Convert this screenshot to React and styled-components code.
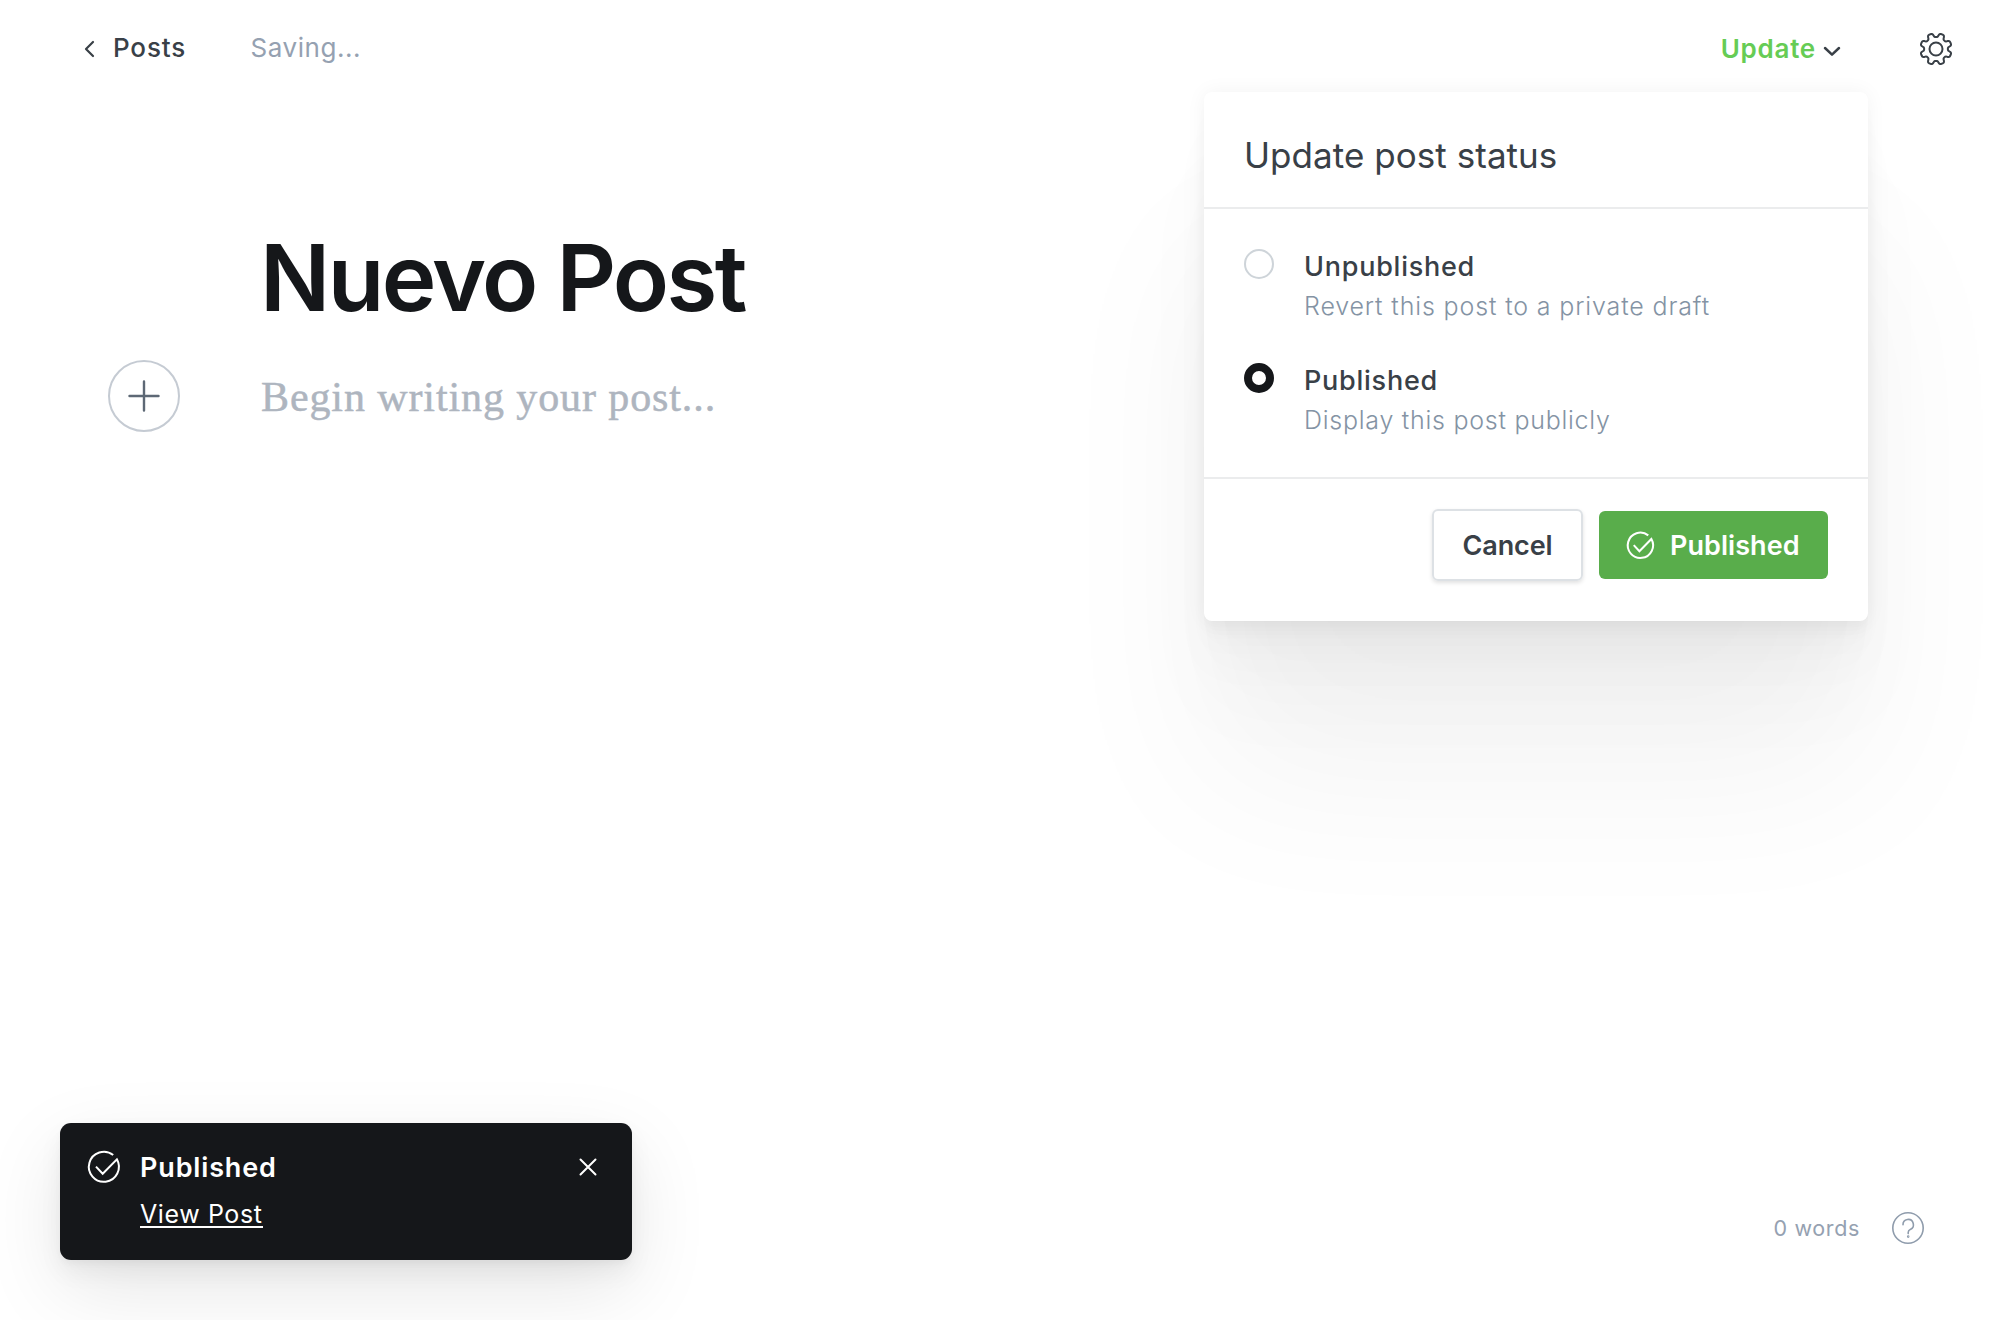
import React from "react";
import styled, { createGlobalStyle } from "styled-components";

const sans = '"Inter", "Liberation Sans", sans-serif';

const Global = createGlobalStyle`
  *, *::before, *::after { box-sizing: border-box; }
  body { margin: 0; background: #fff; font-family: ${sans}; color: #394047; }
  button { font: inherit; color: inherit; background: none; border: 0; padding: 0; margin: 0; cursor: pointer; }
  h1, h2, p { margin: 0; font-weight: inherit; font-size: inherit; }
  svg { display: block; flex: none; overflow: visible; }
`;

const Screen = styled.div`
  position: relative;
  display: flex;
  flex-direction: column;
  width: 2000px;
  height: 1320px;
  overflow: hidden;
`;

const Label = styled.span`
  display: block;
  white-space: nowrap;
  font-size: ${(p) => p.$size}px;
  font-weight: ${(p) => p.$weight || 400};
  letter-spacing: ${(p) => p.$track || 0}px;
  line-height: ${(p) => p.$line || 32}px;
  color: ${(p) => p.$color || "inherit"};
`;

const Header = styled.header`
  display: flex;
  align-items: center;
  height: 97px;
  padding: 0 48px 0 84px;
`;

const HeaderLeft = styled.div`
  display: flex;
  align-items: center;
  gap: 64.5px;
  padding-bottom: 2px;
`;

const BackLink = styled.button`
  display: flex;
  align-items: center;
  gap: 17px;
`;

const UpdateButton = styled.button`
  display: flex;
  align-items: center;
  gap: 7px;
  margin: 1px 79px 0 auto;

  svg { margin-top: 3px; }
`;

const Editor = styled.main`
  display: flex;
  flex-direction: column;
  padding: 125px 0 0 108px;
`;

const Title = styled.h1`
  margin-left: 152px;
  font-size: 92.5px;
  line-height: 110px;
  font-weight: 600;
  letter-spacing: -2.6px;
  color: #15171a;
`;

const BodyRow = styled.div`
  display: flex;
  align-items: center;
  gap: 81px;
  margin-top: 28px;
`;

const PlusButton = styled.button`
  display: flex;
  align-items: center;
  justify-content: center;
  width: 72px;
  height: 72px;
  border: 2px solid #c5cbd3;
  border-radius: 50%;
  color: #5d6875;
`;

const Placeholder = styled.p`
  padding-top: 1px;
  font-family: "Liberation Serif", serif;
  font-size: 42px;
  line-height: 60px;
  letter-spacing: 0.9px;
  color: #aeb5bf;
  -webkit-text-stroke: 0.5px #aeb5bf;
`;

const Menu = styled.section`
  position: absolute;
  top: 92px;
  left: 1204px;
  width: 664px;
  height: 529px;
  display: flex;
  flex-direction: column;
  border-radius: 8px;
  background: #fff;
  box-shadow:
    0 0 20px rgba(0, 0, 0, 0.05),
    0 5.6px 4.4px rgba(0, 0, 0, 0.008),
    0 13.4px 12px rgba(0, 0, 0, 0.014),
    0 25px 24px rgba(0, 0, 0, 0.016),
    0 44.6px 48px rgba(0, 0, 0, 0.018),
    0 83.6px 90px rgba(0, 0, 0, 0.022),
    0 160px 170px rgba(0, 0, 0, 0.048);
`;

const MenuHeader = styled.div`
  height: 117px;
  padding: 42px 40px 0;
  border-bottom: 2px solid #ebeced;
`;

const Options = styled.div`
  display: flex;
  flex-direction: column;
  gap: 34px;
  height: 270px;
  padding: 40px 40px 0;
  border-bottom: 2px solid #ebeced;
`;

const Option = styled.label`
  display: flex;
  gap: 30px;
  height: 80px;
`;

const Radio = styled.span`
  flex: none;
  width: 30px;
  height: 30px;
  border-radius: 50%;
  border: ${(p) => (p.$on ? "8px solid #15171a" : "2px solid #ced4d9")};
`;

const OptionText = styled.div`
  display: flex;
  flex-direction: column;
  gap: 7px;
  padding-top: 2px;
`;

const MenuFooter = styled.div`
  display: flex;
  justify-content: flex-end;
  align-items: center;
  gap: 16px;
  padding: 30px 40px 0;
`;

const CancelButton = styled.button`
  width: 151px;
  height: 72px;
  padding-top: 2px;
  border: 2px solid #dde1e5;
  border-radius: 6px;
  display: flex;
  align-items: center;
  justify-content: center;
  box-shadow: 0 2px 4px rgba(0, 0, 0, 0.12);
`;

const PublishButton = styled.button`
  width: 229px;
  height: 68px;
  padding-left: 28px;
  border-radius: 6px;
  background: #59ad4b;
  color: #fff;
  display: flex;
  align-items: center;
  gap: 16px;

  span { padding-top: 1px; }
`;

const Toast = styled.aside`
  position: absolute;
  left: 60px;
  top: 1123px;
  width: 572px;
  height: 137px;
  display: flex;
  align-items: flex-start;
  padding: 28px 35px 0 28px;
  border-radius: 11px;
  background: #15171a;
  color: #fff;
  box-shadow:
    0 4px 6px rgba(0, 0, 0, 0.03),
    0 12px 24px rgba(0, 0, 0, 0.05),
    0 28px 80px rgba(0, 0, 0, 0.1);
`;

const ToastText = styled.div`
  flex: 1;
  display: flex;
  flex-direction: column;
  align-items: flex-start;
  gap: 18px;
  padding: 1px 0 0 20px;
`;

const ToastLink = styled.a`
  border-bottom: 2px solid #fff;
`;

const CloseButton = styled.button`
  margin-top: 7px;
`;

const StatusBar = styled.footer`
  display: flex;
  align-items: center;
  justify-content: flex-end;
  gap: 32px;
  margin-top: auto;
  padding: 0 76px 76px 0;
`;

const HelpButton = styled.button`
  color: #8f9cac;
`;

const Stroke = ({ w, h, box, width, children }) => (
  <svg width={w} height={h} viewBox={box} fill="none" stroke="currentColor" strokeWidth={width} strokeLinecap="round" strokeLinejoin="round">
    {children}
  </svg>
);

const CheckCircle = ({ size, width }) => (
  <Stroke w={size} h={size} box="0 0 32 32" width={width}>
    <path d="M25.2 4A15 15 0 1 0 28.9 8.3L14.7 22.8L8 15.6" strokeLinecap="butt" strokeLinejoin="miter" />
  </Stroke>
);

const gearPath = (() => {
  const pts = [];
  for (let i = 0; i < 160; i += 1) {
    const a = (i / 160) * Math.PI * 2;
    const wave = Math.cos(8 * (a - Math.PI / 8));
    const r = 13.8 + (1.95 * Math.tanh(2.2 * (wave + 0.1))) / Math.tanh(2.2);
    pts.push(`${(16 + r * Math.cos(a)).toFixed(2)} ${(16 + r * Math.sin(a)).toFixed(2)}`);
  }
  return `M${pts.join("L")}Z`;
})();

const options = [
  { title: "Unpublished", text: "Revert this post to a private draft", on: false, track: 0.75, textTrack: 0.86 },
  { title: "Published", text: "Display this post publicly", on: true, track: 0.75, textTrack: 0.74 },
];

export default function App() {
  return (
    <Screen>
      <Global />
      <Header>
        <HeaderLeft>
          <BackLink>
            <Stroke w={12} h={18} box="0 0 12 18" width={2.2}><path d="M9 3L2 10L9 17" /></Stroke>
            <Label $size={26} $weight={500} $track={0.85}>Posts</Label>
          </BackLink>
          <Label $size={26} $track={0.55} $color="#95a1b1">Saving...</Label>
        </HeaderLeft>
        <UpdateButton>
          <Label $size={26} $weight={600} $track={0.75} $color="#66cc55">Update</Label>
          <Stroke w={18} h={12} box="0 0 18 12" width={2.5}><path d="M2 3L9 9.6L16 3" /></Stroke>
        </UpdateButton>
        <Stroke w={32} h={32} box="0 0 32 32" width={2}>
          <path d={gearPath} /><circle cx="16" cy="16" r="6.5" />
        </Stroke>
      </Header>
      <Editor>
        <Title>Nuevo Post</Title>
        <BodyRow>
          <PlusButton>
            <Stroke w={32} h={32} box="0 0 32 32" width={2.4}><path d="M16 1.5V30.5M1.5 16H30.5" /></Stroke>
          </PlusButton>
          <Placeholder>Begin writing your post...</Placeholder>
        </BodyRow>
      </Editor>
      <StatusBar>
        <Label $size={21.5} $track={0.65} $color="#95a1b1">0 words</Label>
        <HelpButton>
          <Stroke w={32} h={32} box="0 0 32 32" width={1.6}>
            <circle cx="16" cy="16" r="15.2" />
            <path d="M11 12.8A5.2 5.2 0 1 1 18.3 17.4Q16.2 18.4 16.2 20.6V21.6" />
            <circle cx="16.2" cy="24.6" r="0.5" />
          </Stroke>
        </HelpButton>
      </StatusBar>
      <Menu>
        <MenuHeader>
          <Label as="h2" $size={35} $line={42} $track={0.05}>Update post status</Label>
        </MenuHeader>
        <Options>
          {options.map((o) => (
            <Option key={o.title}>
              <Radio $on={o.on} />
              <OptionText>
                <Label $size={27} $weight={500} $track={o.track}>{o.title}</Label>
                <Label $size={25} $weight={300} $track={o.textTrack} $color="#8493a4">{o.text}</Label>
              </OptionText>
            </Option>
          ))}
        </Options>
        <MenuFooter>
          <CancelButton><Label $size={27} $weight={600} $track={-0.1} $line={34}>Cancel</Label></CancelButton>
          <PublishButton>
            <CheckCircle size={27} width={2.4} />
            <Label $size={27} $weight={600} $track={0.05}>Published</Label>
          </PublishButton>
        </MenuFooter>
      </Menu>
      <Toast>
        <CheckCircle size={32} width={2} />
        <ToastText>
          <Label $size={27} $weight={600} $track={0.85}>Published</Label>
          <ToastLink><Label $size={25} $track={0.6} $line={24}>View Post</Label></ToastLink>
        </ToastText>
        <CloseButton>
          <Stroke w={18} h={18} box="0 0 18 18" width={2}><path d="M1.5 1.5L16.5 16.5M16.5 1.5L1.5 16.5" /></Stroke>
        </CloseButton>
      </Toast>
    </Screen>
  );
}
